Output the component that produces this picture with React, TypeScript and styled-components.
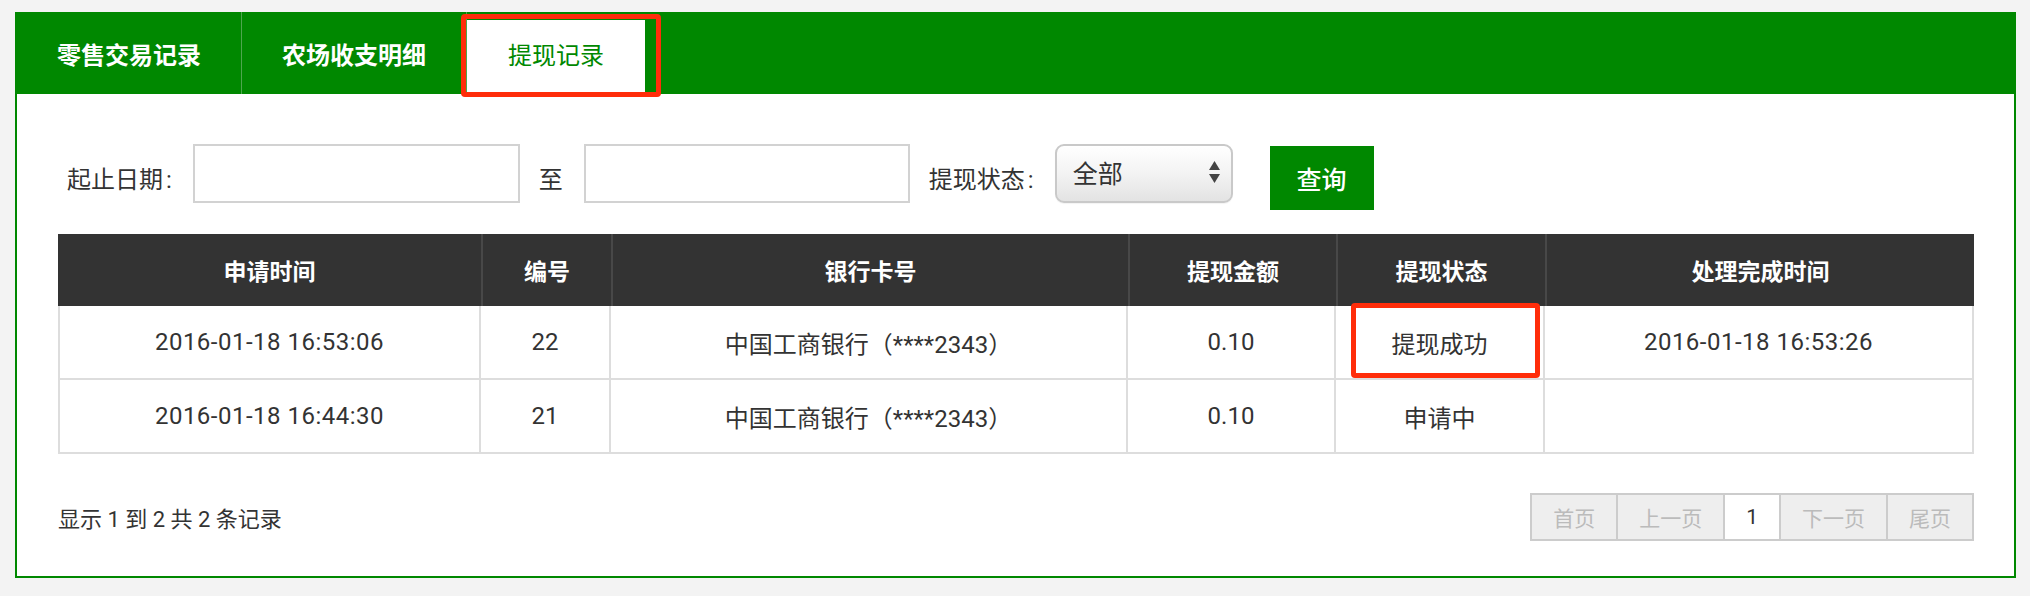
import React from "react";
import styled, { createGlobalStyle } from "styled-components";

const GREEN = "#008800";

const GlobalStyle = createGlobalStyle`
  html, body {
    margin: 0;
    padding: 0;
    background: #f3f3f3;
  }
  body {
    font-family: Roboto, "Noto Sans CJK SC", sans-serif;
    color: #333;
  }
`;

const Page = styled.div`
  padding: 12px 0 0 15px;
`;

const Panel = styled.div`
  width: 2001px;
`;

const TabBar = styled.div`
  display: flex;
  height: 82px;
  padding-left: 2px;
  background: ${GREEN};
`;

const Tab = styled.div<{ $active?: boolean; $divider?: boolean }>`
  position: relative;
  display: flex;
  align-items: center;
  justify-content: center;
  box-sizing: border-box;
  font-size: 24px;
  white-space: nowrap;
  ${(p) =>
    p.$active
      ? `
    margin-top: 8px;
    padding: 0 41px 8px;
    background: #fff;
    color: ${GREEN};
    font-weight: 400;
  `
      : `
    padding: 0 40px;
    color: #fff;
    font-weight: 700;
  `}
  ${(p) => (p.$divider ? `border-right: 1px solid #4ea64e;` : "")}
`;

const Highlight = styled.div`
  position: absolute;
  box-sizing: border-box;
  border: 5px solid #ff2d0a;
  border-radius: 4px;
  pointer-events: none;
`;

const TabHighlight = styled(Highlight)`
  left: -6px;
  top: -6px;
  width: 200px;
  height: 83px;
`;

const CellHighlight = styled(Highlight)`
  left: 15px;
  top: -3px;
  width: 189px;
  height: 75px;
`;

const Content = styled.div`
  border: 2px solid ${GREEN};
  border-top: none;
  background: #fff;
  padding: 0 40px 35px 41px;
`;

const FilterRow = styled.div`
  display: flex;
  align-items: flex-start;
  padding-top: 50px;
  margin-left: 9px;
`;

const Label = styled.span<{ $ml?: number; $mr?: number }>`
  font-size: 24px;
  line-height: 59px;
  padding-top: 7px;
  color: #333;
  white-space: nowrap;
  margin-left: ${(p) => p.$ml ?? 0}px;
  margin-right: ${(p) => p.$mr ?? 0}px;
`;

const Colon = styled.span`
  margin-left: 3px;
`;

const TextInput = styled.input<{ $w: number }>`
  box-sizing: border-box;
  width: ${(p) => p.$w}px;
  height: 59px;
  border: 2px solid #d2d2d2;
  background: #fff;
  outline: none;
  margin: 0;
`;

const SelectBox = styled.div`
  box-sizing: border-box;
  width: 178px;
  height: 59px;
  display: flex;
  align-items: center;
  justify-content: space-between;
  padding: 0 11px 4px 16px;
  border: 2px solid #c9c9c9;
  border-radius: 9px;
  background: linear-gradient(#ffffff 0%, #f3f3f3 50%, #e3e3e3 100%);
  box-shadow: inset 0 1px 1px rgba(255, 255, 255, 0.9), 0 1px 1px rgba(0, 0, 0, 0.05);
  font-size: 25px;
  color: #333;
`;

const QueryButton = styled.button`
  box-sizing: border-box;
  width: 104px;
  height: 64px;
  margin: 2px 0 0 37px;
  border: none;
  background: ${GREEN};
  color: #fff;
  font-family: Roboto, "Noto Sans CJK SC", sans-serif;
  font-size: 25px;
  font-weight: 500;
  cursor: pointer;
`;

const Table = styled.table`
  margin-top: 24px;
  width: 1916px;
  table-layout: fixed;
  border-collapse: separate;
  border-spacing: 0;
`;

const Col = styled.col<{ $w: number }>`
  width: ${(p) => p.$w}px;
`;

const Th = styled.th`
  height: 72px;
  padding: 0;
  background: #333;
  color: #fff;
  font-size: 23px;
  font-weight: 700;
  text-align: center;
  border-left: 2px solid #484848;
  &:first-child {
    border-left: none;
  }
`;

const Td = styled.td<{ $wide?: boolean }>`
  position: relative;
  height: 72px;
  padding: 0;
  font-size: 24px;
  letter-spacing: ${(p) => (p.$wide ? "0.5px" : "0")};
  color: #333;
  text-align: center;
  border-right: 2px solid #ddd;
  border-bottom: 2px solid #ddd;
  &:first-child {
    border-left: 2px solid #ddd;
  }
`;

const Footer = styled.div`
  display: flex;
  align-items: center;
  justify-content: space-between;
  margin-top: 39px;
`;

const Summary = styled.span`
  font-size: 22px;
  color: #333;
`;

const Pager = styled.div`
  display: flex;
  height: 48px;
  box-sizing: border-box;
  border: 2px solid #ccc;
`;

const PageItem = styled.span<{ $current?: boolean }>`
  display: flex;
  align-items: center;
  padding: 0 21px;
  font-size: 21px;
  background: ${(p) => (p.$current ? "#fff" : "#eee")};
  color: ${(p) => (p.$current ? "#333" : "#bbb")};
  border-left: 2px solid #ccc;
  &:first-child {
    border-left: none;
  }
`;

const Arrows = () => (
  <svg width="11" height="22" viewBox="0 0 11 22">
    <polygon points="0,9 5.5,0 11,9" fill="#444" />
    <polygon points="0,13 11,13 5.5,22" fill="#444" />
  </svg>
);

const columns = [
  { title: "申请时间", w: 423 },
  { title: "编号", w: 130 },
  { title: "银行卡号", w: 517 },
  { title: "提现金额", w: 208 },
  { title: "提现状态", w: 209 },
  { title: "处理完成时间", w: 429 },
];

const rows = [
  {
    time: "2016-01-18 16:53:06",
    id: "22",
    card: "中国工商银行（****2343）",
    amount: "0.10",
    status: "提现成功",
    done: "2016-01-18 16:53:26",
    mark: true,
  },
  {
    time: "2016-01-18 16:44:30",
    id: "21",
    card: "中国工商银行（****2343）",
    amount: "0.10",
    status: "申请中",
    done: "",
    mark: false,
  },
];

export default function App() {
  return (
    <>
      <GlobalStyle />
      <Page>
        <Panel>
          <TabBar>
            <Tab $divider>零售交易记录</Tab>
            <Tab $divider>农场收支明细</Tab>
            <Tab $active>
              提现记录
              <TabHighlight />
            </Tab>
          </TabBar>
          <Content>
            <FilterRow>
              <Label $mr={21}>
                起止日期<Colon>:</Colon>
              </Label>
              <TextInput $w={327} />
              <Label $ml={19} $mr={21}>至</Label>
              <TextInput $w={326} />
              <Label $ml={19} $mr={21}>
                提现状态<Colon>:</Colon>
              </Label>
              <SelectBox>
                <span>全部</span>
                <Arrows />
              </SelectBox>
              <QueryButton>查询</QueryButton>
            </FilterRow>

            <Table>
              <colgroup>
                {columns.map((c) => (
                  <Col key={c.title} $w={c.w} />
                ))}
              </colgroup>
              <thead>
                <tr>
                  {columns.map((c) => (
                    <Th key={c.title}>{c.title}</Th>
                  ))}
                </tr>
              </thead>
              <tbody>
                {rows.map((r) => (
                  <tr key={r.id}>
                    <Td $wide>{r.time}</Td>
                    <Td>{r.id}</Td>
                    <Td>{r.card}</Td>
                    <Td>{r.amount}</Td>
                    <Td>
                      {r.status}
                      {r.mark && <CellHighlight />}
                    </Td>
                    <Td $wide>{r.done}</Td>
                  </tr>
                ))}
              </tbody>
            </Table>

            <Footer>
              <Summary>显示 1 到 2 共 2 条记录</Summary>
              <Pager>
                <PageItem>首页</PageItem>
                <PageItem>上一页</PageItem>
                <PageItem $current>1</PageItem>
                <PageItem>下一页</PageItem>
                <PageItem>尾页</PageItem>
              </Pager>
            </Footer>
          </Content>
        </Panel>
      </Page>
    </>
  );
}
